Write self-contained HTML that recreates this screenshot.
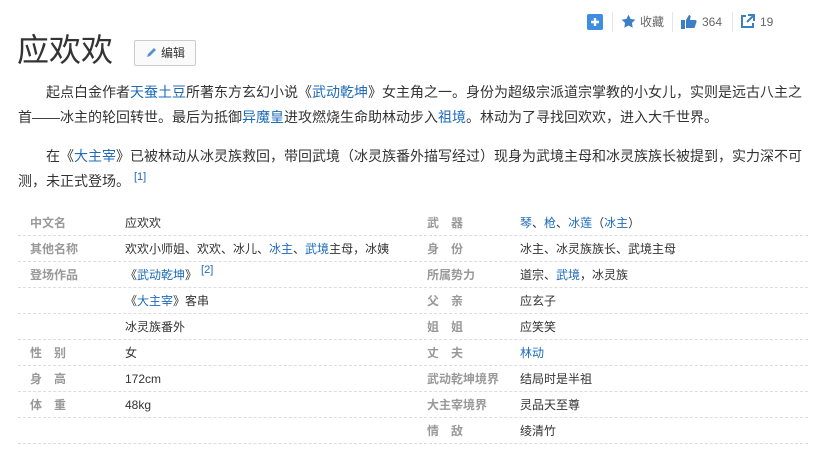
<!DOCTYPE html>
<html><head><meta charset="utf-8"><style>
*{margin:0;padding:0;box-sizing:border-box}
body{width:825px;height:469px;background:#fff;font-family:"Liberation Sans","Noto Sans CJK SC",sans-serif;color:#333;position:relative;overflow:hidden}
a{color:#1e6bb8;text-decoration:none}
.abs{position:absolute}
h1{position:absolute;left:17px;top:28px;font-size:32px;font-weight:normal;color:#333;line-height:44px}
.edit{left:134px;top:40px;width:62px;height:26px;border:1px solid #ccc;border-radius:2px;font-size:12px;color:#333;line-height:24px;padding-left:26px;background:#fafafa}
.top{top:12px;font-size:12px;color:#666;line-height:20px}
.sep{top:12px;width:1px;height:20px;background:#e6e6e6}
p{position:absolute;left:18px;width:790px;font-size:14px;line-height:25px;text-indent:28px;color:#333}
sup{font-size:11px;color:#1e6bb8;vertical-align:6px;margin-left:4px;line-height:0}
.row{position:absolute;left:18px;width:790px;height:26px;border-bottom:1px dashed #ddd;font-size:12px;line-height:26px}
.row span{position:absolute}
.l1{left:12px;color:#999;font-weight:bold}.v1{left:107px}.l2{left:409px;color:#999;font-weight:bold}.v2{left:502px}
</style></head><body>
<svg class="abs" style="left:587px;top:14px" width="16" height="16"><rect width="16" height="16" rx="2" fill="#3d8ee0"/><path d="M8 4v8M4 8h8" stroke="#fff" stroke-width="2.4"/></svg>
<div class="sep abs" style="left:612px"></div>
<svg class="abs" style="left:621px;top:14px" width="15" height="15" viewBox="0 0 24 24"><path d="M12 1l3.4 7 7.6 1-5.5 5.3 1.3 7.6L12 18.3 5.2 21.9l1.3-7.6L1 9l7.6-1z" fill="#3d7fc5"/></svg>
<div class="abs top" style="left:640px">收藏</div>
<div class="sep abs" style="left:672px"></div>
<svg class="abs" style="left:681px;top:14px" width="16" height="15" viewBox="0 0 16 15"><rect x="0" y="6" width="4" height="9" fill="#3d7fc5"/><path d="M5 6L8 1c1 0 2 1 1.5 2.5L9 6h5c1 0 2 1 1.5 2l-2 6H5z" fill="#3d7fc5"/></svg>
<div class="abs top" style="left:702px">364</div>
<div class="sep abs" style="left:732px"></div>
<svg class="abs" style="left:740px;top:14px" width="15" height="15" viewBox="0 0 15 15"><path d="M6 2H2v11h11V9" stroke="#3d7fc5" stroke-width="2" fill="none"/><path d="M8 1h6v6M14 1L7 8" stroke="#3d7fc5" stroke-width="2" fill="none"/></svg>
<div class="abs top" style="left:760px">19</div>
<h1>应欢欢</h1>
<div class="abs edit"><svg class="abs" style="left:10px;top:6px" width="12" height="12"><path d="M2 10l1-3 6-6 2 2-6 6z" fill="#5a8fd0"/></svg>编辑</div>
<p style="top:80px">起点白金作者<a>天蚕土豆</a>所著东方玄幻小说《<a>武动乾坤</a>》女主角之一。身份为超级宗派道宗掌教的小女儿，实则是远古八主之首——冰主的轮回转世。最后为抵御<a>异魔皇</a>进攻燃烧生命助林动步入<a>祖境</a>。林动为了寻找回欢欢，进入大千世界。</p>
<p style="top:144px">在《<a>大主宰</a>》已被林动从冰灵族救回，带回武境（冰灵族番外描写经过）现身为武境主母和冰灵族族长被提到，实力深不可测，未正式登场。<sup>[1]</sup></p>
<div class="row" style="top:210px"><span class="l1">中文名</span><span class="v1">应欢欢</span><span class="l2">武　器</span><span class="v2"><a>琴</a>、<a>枪</a>、<a>冰莲</a>（<a>冰主</a>）</span></div>
<div class="row" style="top:236px"><span class="l1">其他名称</span><span class="v1">欢欢小师姐、欢欢、冰儿、<a>冰主</a>、<a>武境</a>主母，冰姨</span><span class="l2">身　份</span><span class="v2">冰主、冰灵族族长、武境主母</span></div>
<div class="row" style="top:262px"><span class="l1">登场作品</span><span class="v1">《<a>武动乾坤</a>》<sup>[2]</sup></span><span class="l2">所属势力</span><span class="v2">道宗、<a>武境</a>，冰灵族</span></div>
<div class="row" style="top:288px"><span class="v1">《<a>大主宰</a>》客串</span><span class="l2">父　亲</span><span class="v2">应玄子</span></div>
<div class="row" style="top:314px"><span class="v1">冰灵族番外</span><span class="l2">姐　姐</span><span class="v2">应笑笑</span></div>
<div class="row" style="top:340px"><span class="l1">性　别</span><span class="v1">女</span><span class="l2">丈　夫</span><span class="v2"><a>林动</a></span></div>
<div class="row" style="top:366px"><span class="l1">身　高</span><span class="v1">172cm</span><span class="l2">武动乾坤境界</span><span class="v2">结局时是半祖</span></div>
<div class="row" style="top:392px"><span class="l1">体　重</span><span class="v1">48kg</span><span class="l2">大主宰境界</span><span class="v2">灵品天至尊</span></div>
<div class="row" style="top:418px"><span class="l2">情　敌</span><span class="v2">绫清竹</span></div>
</body></html>
